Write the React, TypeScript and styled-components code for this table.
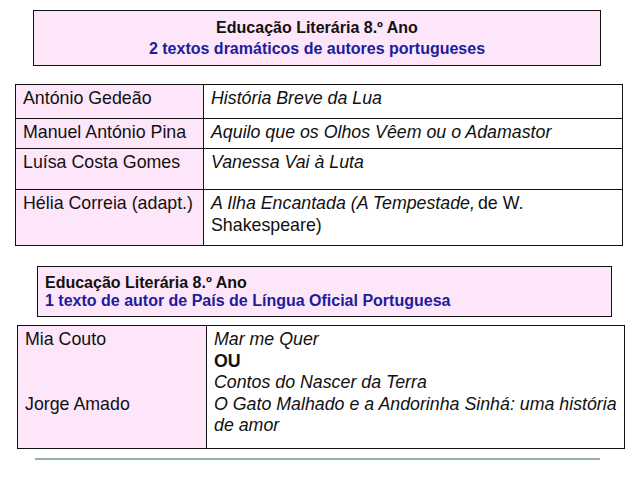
import React from "react";
import styled, { createGlobalStyle } from "styled-components";

const GlobalStyle = createGlobalStyle`
  html, body { margin: 0; padding: 0; background: #ffffff; }
  * { box-sizing: border-box; }
  body { font-family: "Liberation Sans", Arial, Helvetica, sans-serif; color: #111; }
`;

const PINK = "#fde6fa";
const BLUE = "#1c1c9e";

const Page = styled.div`
  width: 638px;
  height: 479px;
  display: flex;
  flex-direction: column;
  padding-top: 10px;
  overflow: hidden;
`;

const HeaderBox = styled.div<{ $left: number; $width: number; $height: number; $top: number; $align: "center" | "left"; $line: number }>`
  margin-left: ${(p) => p.$left}px;
  margin-top: ${(p) => p.$top}px;
  width: ${(p) => p.$width}px;
  height: ${(p) => p.$height}px;
  background: ${PINK};
  border: 1px solid #111;
  display: flex;
  flex-direction: column;
  justify-content: center;
  align-items: ${(p) => (p.$align === "center" ? "center" : "flex-start")};
  padding: 0 7px;
  font-weight: bold;
  font-size: 16px;
  line-height: ${(p) => p.$line}px;
`;

const HeaderTitle = styled.div`
  color: #111;
`;

const HeaderSub = styled.div`
  color: ${BLUE};
`;

const Table = styled.table<{ $left: number; $top: number }>`
  margin-left: ${(p) => p.$left}px;
  margin-top: ${(p) => p.$top}px;
  width: 608px;
  border-collapse: collapse;
  table-layout: fixed;
  font-size: 17.8px;
  line-height: 21.6px;
`;

const Row = styled.tr<{ $h: number }>`
  height: ${(p) => p.$h}px;
`;

const NameCell = styled.td<{ $w: number }>`
  width: ${(p) => p.$w}px;
  background: ${PINK};
  border: 1px solid #111;
  vertical-align: top;
  padding: 3px 4px 0 7px;
  white-space: nowrap;
`;

const TitleCell = styled.td`
  background: #ffffff;
  border: 1px solid #111;
  vertical-align: top;
  padding: 3px 6px 0 7px;
`;

const Em = styled.i<{ $gap?: boolean }>`
  padding-right: ${(p) => (p.$gap ? "3px" : "0")};
`;

const Plain = styled.span``;

const Strong = styled.b``;

const Spacer = styled.div<{ $h: number }>`
  height: ${(p) => p.$h}px;
`;

const Rule = styled.div`
  margin-left: 35px;
  margin-top: 9px;
  width: 565px;
  height: 2px;
  background: #94aeb4;
`;

export default function App() {
  return (
    <>
      <GlobalStyle />
      <Page>
        <HeaderBox $left={33} $top={0} $width={568} $height={56} $align="center" $line={21}>
          <HeaderTitle>Educação Literária 8.º Ano</HeaderTitle>
          <HeaderSub>2 textos dramáticos de autores portugueses</HeaderSub>
        </HeaderBox>

        <Table $left={15} $top={18}>
          <tbody>
            <Row $h={34}>
              <NameCell $w={188}>António Gedeão</NameCell>
              <TitleCell>
                <Em>História Breve da Lua</Em>
              </TitleCell>
            </Row>
            <Row $h={30}>
              <NameCell $w={188}>Manuel António Pina</NameCell>
              <TitleCell>
                <Em>Aquilo que os Olhos Vêem ou o Adamastor</Em>
              </TitleCell>
            </Row>
            <Row $h={41}>
              <NameCell $w={188}>Luísa Costa Gomes</NameCell>
              <TitleCell>
                <Em>Vanessa Vai à Luta</Em>
              </TitleCell>
            </Row>
            <Row $h={56}>
              <NameCell $w={188}>Hélia Correia (adapt.)</NameCell>
              <TitleCell>
                <Em $gap>A Ilha Encantada (A Tempestade,</Em>
                <Plain>de W.</Plain>
                <br />
                <Plain>Shakespeare)</Plain>
              </TitleCell>
            </Row>
          </tbody>
        </Table>

        <HeaderBox $left={37} $top={20} $width={575} $height={51} $align="left" $line={18}>
          <HeaderTitle>Educação Literária 8.º Ano</HeaderTitle>
          <HeaderSub>1 texto de autor de País de Língua Oficial Portuguesa</HeaderSub>
        </HeaderBox>

        <Table $left={17} $top={8}>
          <tbody>
            <Row $h={123}>
              <NameCell $w={189}>
                Mia Couto
                <Spacer $h={43} />
                Jorge Amado
              </NameCell>
              <TitleCell>
                <Em>Mar me Quer</Em>
                <br />
                <Strong>OU</Strong>
                <br />
                <Em>Contos do Nascer da Terra</Em>
                <br />
                <Em>O Gato Malhado e a Andorinha Sinhá: uma história de amor</Em>
              </TitleCell>
            </Row>
          </tbody>
        </Table>

        <Rule />
      </Page>
    </>
  );
}
